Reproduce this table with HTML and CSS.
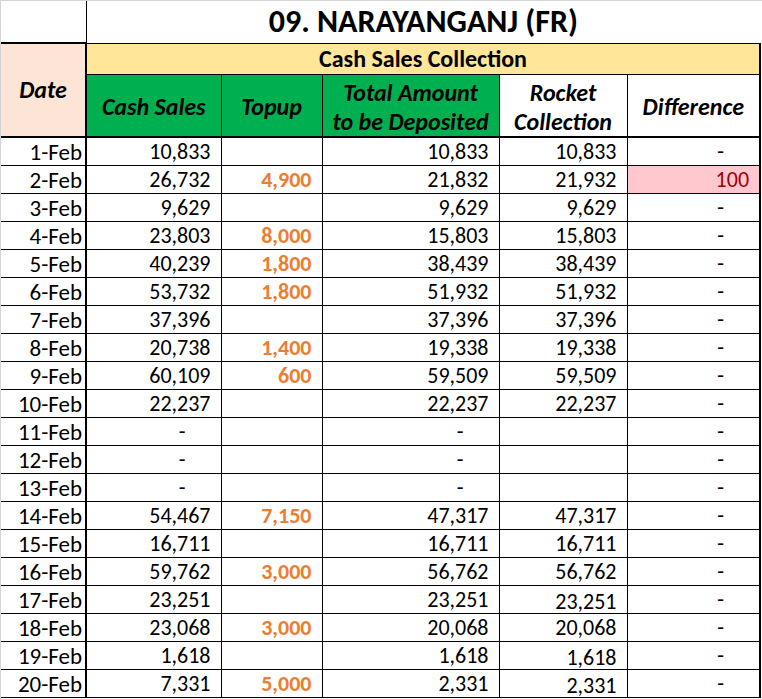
FILE: index.html
```html
<!DOCTYPE html>
<html>
<head>
<meta charset="utf-8">
<link rel="stylesheet" href="styles.css">
</head>
<body>
<div class="sheet">
<table class="report">
<colgroup>
<col class="c-date"><col class="c-cash"><col class="c-topup"><col class="c-total"><col class="c-rocket"><col class="c-diff">
</colgroup>
<thead>
<tr class="r-title">
<th class="title-blank"></th>
<th class="title" colspan="5">09. NARAYANGANJ (FR)</th>
</tr>
<tr class="r-group">
<th class="date-head" rowspan="2">Date</th>
<th class="group" colspan="5">Cash Sales Collection</th>
</tr>
<tr class="r-cols">
<th class="green">Cash Sales</th>
<th class="green">Topup</th>
<th class="green">Total Amount<br>to be Deposited</th>
<th class="plain">Rocket<br>Collection</th>
<th class="plain diff-head">Difference</th>
</tr>
</thead>
<tbody>
<tr><td class="date">1-Feb</td><td>10,833</td><td class="top"></td><td>10,833</td><td>10,833</td><td class="diff dash">-</td></tr>
<tr><td class="date">2-Feb</td><td>26,732</td><td class="top">4,900</td><td>21,832</td><td>21,932</td><td class="diff bad">100</td></tr>
<tr><td class="date">3-Feb</td><td>9,629</td><td class="top"></td><td>9,629</td><td>9,629</td><td class="diff dash">-</td></tr>
<tr><td class="date">4-Feb</td><td>23,803</td><td class="top">8,000</td><td>15,803</td><td>15,803</td><td class="diff dash">-</td></tr>
<tr><td class="date">5-Feb</td><td>40,239</td><td class="top">1,800</td><td>38,439</td><td>38,439</td><td class="diff dash">-</td></tr>
<tr><td class="date">6-Feb</td><td>53,732</td><td class="top">1,800</td><td>51,932</td><td>51,932</td><td class="diff dash">-</td></tr>
<tr><td class="date">7-Feb</td><td>37,396</td><td class="top"></td><td>37,396</td><td>37,396</td><td class="diff dash">-</td></tr>
<tr><td class="date">8-Feb</td><td>20,738</td><td class="top">1,400</td><td>19,338</td><td>19,338</td><td class="diff dash">-</td></tr>
<tr><td class="date">9-Feb</td><td>60,109</td><td class="top">600</td><td>59,509</td><td>59,509</td><td class="diff dash">-</td></tr>
<tr><td class="date">10-Feb</td><td>22,237</td><td class="top"></td><td>22,237</td><td>22,237</td><td class="diff dash">-</td></tr>
<tr><td class="date">11-Feb</td><td class="dash">-</td><td class="top"></td><td class="dash">-</td><td></td><td class="diff dash">-</td></tr>
<tr><td class="date">12-Feb</td><td class="dash">-</td><td class="top"></td><td class="dash">-</td><td></td><td class="diff dash">-</td></tr>
<tr><td class="date">13-Feb</td><td class="dash">-</td><td class="top"></td><td class="dash">-</td><td></td><td class="diff dash">-</td></tr>
<tr><td class="date">14-Feb</td><td>54,467</td><td class="top">7,150</td><td>47,317</td><td>47,317</td><td class="diff dash">-</td></tr>
<tr><td class="date">15-Feb</td><td>16,711</td><td class="top"></td><td>16,711</td><td>16,711</td><td class="diff dash">-</td></tr>
<tr><td class="date">16-Feb</td><td>59,762</td><td class="top">3,000</td><td>56,762</td><td>56,762</td><td class="diff dash">-</td></tr>
<tr><td class="date">17-Feb</td><td>23,251</td><td class="top"></td><td>23,251</td><td class="low">23,251</td><td class="diff dash">-</td></tr>
<tr><td class="date">18-Feb</td><td>23,068</td><td class="top">3,000</td><td>20,068</td><td>20,068</td><td class="diff dash">-</td></tr>
<tr><td class="date">19-Feb</td><td>1,618</td><td class="top"></td><td>1,618</td><td class="low">1,618</td><td class="diff dash">-</td></tr>
<tr><td class="date">20-Feb</td><td>7,331</td><td class="top">5,000</td><td>2,331</td><td class="low">2,331</td><td class="diff dash">-</td></tr>
</tbody>
</table>
</div>
</body>
</html>
```
FILE: styles.css
```css
html, body {
  margin: 0;
  padding: 0;
  background: #ffffff;
}
.sheet {
  width: 762px;
  height: 699px;
  overflow: hidden;
  box-sizing: border-box;
  border-top: 1px solid #d4d4d4;
  border-left: 1px solid #d4d4d4;
  background: #ffffff;
}
.report {
  border-collapse: collapse;
  table-layout: fixed;
  width: 759px;
  font-family: Carlito, Calibri, Lato, sans-serif;
  font-size: 22px;
  color: #000000;
}
.c-date { width: 85px; }
.c-cash { width: 135px; }
.c-topup { width: 101px; }
.c-total { width: 177px; }
.c-rocket { width: 128px; }
.c-diff { width: 133px; }

.report th, .report td {
  padding: 0;
  border: 1px solid #000000;
  overflow: hidden;
  white-space: nowrap;
}
.r-title th { height: 41px; }
.title-blank {
  border-top: none !important;
  border-left: none !important;
  border-bottom: 2px solid #000000 !important;
}
.title {
  font-size: 32px;
  line-height: 38px;
  font-weight: bold;
  text-align: center;
  vertical-align: middle;
  border-top: none !important;
  border-right: none !important;
  padding-top: 2px;
}
.r-group th { height: 30px; }
.group {
  background: #ffe699;
  font-size: 24px;
  line-height: 28px;
  font-weight: bold;
  text-align: center;
  border-right: 2px solid #000000 !important;
  padding-top: 2px;
}
.date-head {
  background: #fce4d6;
  font-size: 24px;
  font-style: italic;
  font-weight: bold;
  border-left: none !important;
  border-right: 2px solid #000000 !important;
  border-bottom: 2px solid #000000 !important;
  vertical-align: middle;
  padding-top: 2px;
}
.r-cols th {
  height: 58px;
  font-size: 24px;
  font-style: italic;
  font-weight: bold;
  line-height: 29px;
  text-align: center;
  vertical-align: middle;
  border-bottom: 2px solid #000000;
  padding-top: 3px;
}
.green { background: #00b050; }
.plain { background: #ffffff; }
.diff-head { border-right: 2px solid #000000 !important; }

.report td {
  height: 27px;
  text-align: right;
  vertical-align: bottom;
  padding-right: 10px;
  line-height: 26px;
}
.report td.date {
  font-size: 23px;
  border-left: none;
  border-right: 2px solid #000000;
  padding-right: 3px;
}
.report td.top {
  color: #ed7d31;
  font-weight: bold;
}
.report td.diff {
  border-right: 2px solid #000000;
}
.report td.dash {
  padding-right: 35px;
}
.report td.bad {
  background: #ffc7ce;
  color: #9c0006;
}
.report td.low {
  line-height: 22px;
}
```
